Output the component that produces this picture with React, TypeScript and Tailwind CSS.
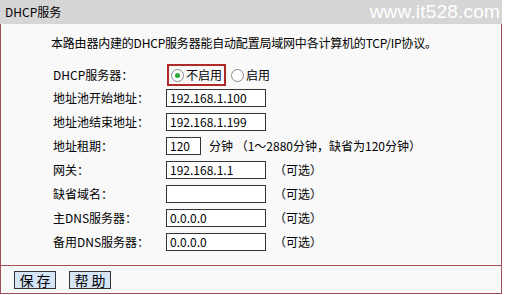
import React from "react";

const font = {
  fontFamily: '"Noto Sans CJK SC", "Liberation Sans", sans-serif',
};

type Row = {
  label: string;
  value?: string;
  width?: string;
  suffix?: string;
};

const rows: Row[] = [
  { label: "地址池开始地址：", value: "192.168.1.100" },
  { label: "地址池结束地址：", value: "192.168.1.199" },
  { label: "地址租期：", value: "120", width: "w-[35px]", suffix: "分钟 （1～2880分钟，缺省为120分钟）" },
  { label: "网关：", value: "192.168.1.1", suffix: "（可选）" },
  { label: "缺省域名：", value: "", suffix: "（可选）" },
  { label: "主DNS服务器：", value: "0.0.0.0", suffix: "（可选）" },
  { label: "备用DNS服务器：", value: "0.0.0.0", suffix: "（可选）" },
];

const Radio = ({ checked }: { checked?: boolean }) => (
  <span className="w-[13px] h-[13px] rounded-full border border-[#8a8a8a] bg-white flex items-center justify-center shrink-0">
    {checked && <span className="w-[5px] h-[5px] rounded-full bg-[#2fa838]" />}
  </span>
);

export default function App() {
  return (
    <div className="w-[505px] h-[295px] bg-white text-[12px] leading-[16px] text-black" style={font}>
      {/* Title */}
      <div className="w-[502px] h-[24px] bg-[#d6d6d6] flex items-center justify-between pl-[5px] pr-[2px]">
        <span className="text-[12px]">DHCP服务</span>
        <span
          className="text-[19px] text-white tracking-[0.2px]"
          style={{ fontFamily: '"Liberation Sans", sans-serif' }}
        >
          www.it528.com
        </span>
      </div>

      <div className="w-[502px] border-x border-b border-[#a4505a] bg-[#f9f9f9]">
        <div className="pl-[50px] pt-[11px] h-[40px] tracking-[-0.2px]">
          本路由器内建的DHCP服务器能自动配置局域网中各计算机的TCP/IP协议。
        </div>

        <div className="flex flex-col">
          <div className="flex items-center h-[22px]">
            <span className="w-[164px] pl-[52px]">DHCP服务器：</span>
            <div className="ml-[2px] h-[22px] border-2 border-[#b02a2a] flex items-center gap-[2px] pl-[2px] pr-[2px]">
              <Radio checked />
              <span>不启用</span>
            </div>
            <div className="ml-[5px] flex items-center gap-[2px]">
              <Radio />
              <span>启用</span>
            </div>
          </div>

          {rows.map((r) => (
            <div key={r.label} className="flex items-center h-[24px]">
              <span className="w-[165px] pl-[52px]">{r.label}</span>
              <div
                className={`${r.width ?? "w-[100px]"} h-[18px] border border-[#333] bg-white flex items-center pl-[3px] whitespace-nowrap overflow-hidden`}
              >
                {r.value}
              </div>
              {r.suffix && <span className="ml-[8px]">{r.suffix}</span>}
            </div>
          ))}
        </div>

        <div className="mt-[11px] border-t border-[#a4505a] h-[28px] flex items-start gap-[13px] pl-[13px] pt-[5px]">
          <button className="w-[42px] h-[18px] bg-[#d6e5f5] border border-[#333] flex items-center justify-center text-[14px] leading-none whitespace-nowrap">
            保&nbsp;存
          </button>
          <button className="w-[42px] h-[18px] bg-[#d6e5f5] border border-[#333] flex items-center justify-center text-[14px] leading-none whitespace-nowrap">
            帮&nbsp;助
          </button>
        </div>
      </div>
    </div>
  );
}
